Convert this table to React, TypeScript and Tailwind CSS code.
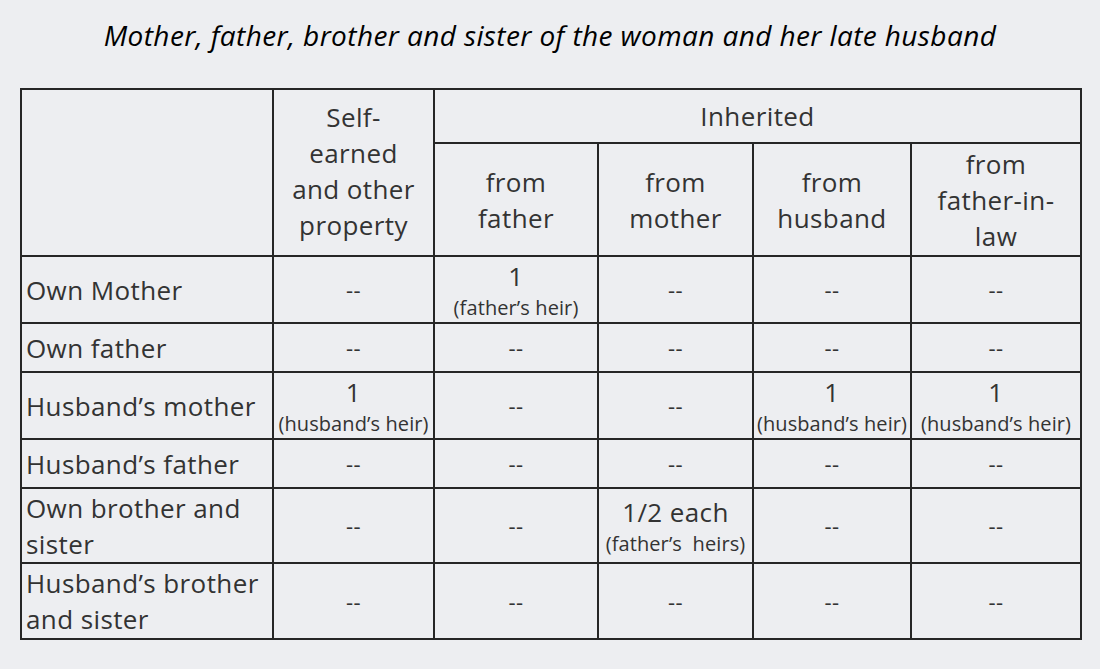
import React from 'react';

type Cell = { main: string; note?: string };

const rows: { label: string; cells: Cell[]; h: string }[] = [
  {
    label: 'Own Mother',
    h: 'h-[67px]',
    cells: [{ main: '--' }, { main: '1', note: '(father’s heir)' }, { main: '--' }, { main: '--' }, { main: '--' }],
  },
  {
    label: 'Own father',
    h: 'h-[49px]',
    cells: [{ main: '--' }, { main: '--' }, { main: '--' }, { main: '--' }, { main: '--' }],
  },
  {
    label: 'Husband’s mother',
    h: 'h-[67px]',
    cells: [
      { main: '1', note: '(husband’s heir)' },
      { main: '--' },
      { main: '--' },
      { main: '1', note: '(husband’s heir)' },
      { main: '1', note: '(husband’s heir)' },
    ],
  },
  {
    label: 'Husband’s father',
    h: 'h-[49px]',
    cells: [{ main: '--' }, { main: '--' }, { main: '--' }, { main: '--' }, { main: '--' }],
  },
  {
    label: 'Own brother and sister',
    h: 'h-[75px]',
    cells: [{ main: '--' }, { main: '--' }, { main: '1/2 each', note: '(father’s  heirs)' }, { main: '--' }, { main: '--' }],
  },
  {
    label: 'Husband’s brother and sister',
    h: 'h-[76px]',
    cells: [{ main: '--' }, { main: '--' }, { main: '--' }, { main: '--' }, { main: '--' }],
  },
];

const ValueCell: React.FC<{ cell: Cell }> = ({ cell }) => (
  <td className="border-2 border-[#262626] p-0 text-center align-middle">
    {cell.note ? (
      <div className="flex flex-col items-center">
        <span className="text-[26px] leading-[35px]">{cell.main}</span>
        <span className="whitespace-pre text-[20px] leading-[27px] tracking-[0.1px]">{cell.note}</span>
      </div>
    ) : (
      <span className="text-[22px]">{cell.main}</span>
    )}
  </td>
);

export default function App() {
  return (
    <div className="min-h-screen bg-[#edeef1] px-5 pt-[16px] font-['Open_Sans',_'Noto_Sans',sans-serif] tracking-[0.4px] text-[#333]">
      <h1 className="text-center text-[28px] italic leading-[38px] tracking-[0.4px] text-black">
        Mother, father, brother and sister of the woman and her late husband
      </h1>
      <table className="mt-[34px] w-[1060px] table-fixed border-collapse border-2 border-[#262626]">
        <colgroup>
          <col className="w-[252px]" />
          <col className="w-[161px]" />
          <col className="w-[164px]" />
          <col className="w-[155px]" />
          <col className="w-[158px]" />
          <col className="w-[170px]" />
        </colgroup>
        <thead>
          <tr className="h-[54px]">
            <td rowSpan={2} className="border-2 border-[#262626] p-0" />
            <td
              rowSpan={2}
              className="border-2 border-[#262626] border-r border-r-[#777] px-1 pt-[9px] text-center align-top text-[26px] leading-[36px]"
            >
              Self-
              <br />
              earned
              <br />
              and other
              <br />
              property
            </td>
            <td colSpan={4} className="border-2 border-[#262626] border-b border-b-[#888] border-r border-r-[#777] text-center text-[26px] leading-[36px]">
              Inherited
            </td>
          </tr>
          <tr className="h-[113px]">
            <td className="border-2 border-[#262626] text-center text-[26px] leading-[36px]">
              from
              <br />
              father
            </td>
            <td className="border-2 border-[#262626] text-center text-[26px] leading-[36px]">
              from
              <br />
              mother
            </td>
            <td className="border-2 border-[#262626] text-center text-[26px] leading-[36px]">
              from
              <br />
              husband
            </td>
            <td className="border-2 border-[#262626] border-r border-r-[#777] px-1 text-center text-[26px] leading-[36px]">
              from
              <br />
              father-in-
              <br />
              law
            </td>
          </tr>
        </thead>
        <tbody>
          {rows.map((r) => (
            <tr key={r.label} className={r.h}>
              <td className="border-2 border-[#262626] py-0 pl-[4px] pr-1 align-middle text-[26px] leading-[36px]">
                {r.label}
              </td>
              {r.cells.map((c, i) => (
                <ValueCell key={i} cell={c} />
              ))}
            </tr>
          ))}
        </tbody>
      </table>
    </div>
  );
}
